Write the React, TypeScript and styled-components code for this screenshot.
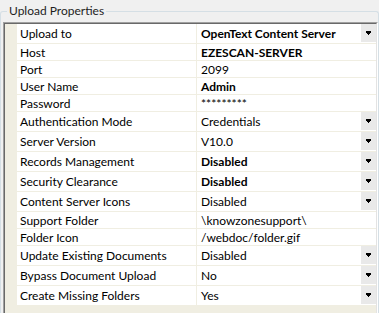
import React from 'react';
import styled, { createGlobalStyle } from 'styled-components';

const colors = {
  window: '#f0f0f0',
  groupLine: '#d5dfe5',
  margin: '#f0eee2',
  cell: '#ffffff',
  text: '#000000',
  button: '#e9e9e9',
  borderDark: '#a0a0a0',
  borderDarker: '#696969',
  borderLight: '#e3e3e3',
};

const GlobalStyle = createGlobalStyle`
  html, body {
    margin: 0;
    padding: 0;
    background: ${colors.window};
    overflow: hidden;
  }
  body {
    font-family: Lato, 'Liberation Sans', sans-serif;
    font-size: 12px;
    color: ${colors.text};
  }
`;

type Prop = {
  label: string;
  value: string;
  bold?: boolean;
  dropdown?: boolean;
};

const props: Prop[] = [
  { label: 'Upload to', value: 'OpenText Content Server', bold: true, dropdown: true },
  { label: 'Host', value: 'EZESCAN-SERVER', bold: true },
  { label: 'Port', value: '2099' },
  { label: 'User Name', value: 'Admin', bold: true },
  { label: 'Password', value: '*********' },
  { label: 'Authentication Mode', value: 'Credentials', dropdown: true },
  { label: 'Server Version', value: 'V10.0', dropdown: true },
  { label: 'Records Management', value: 'Disabled', bold: true, dropdown: true },
  { label: 'Security Clearance', value: 'Disabled', bold: true, dropdown: true },
  { label: 'Content Server Icons', value: 'Disabled', dropdown: true },
  { label: 'Support Folder', value: '\\knowzonesupport\\' },
  { label: 'Folder Icon', value: '/webdoc/folder.gif' },
  { label: 'Update Existing Documents', value: 'Disabled', dropdown: true },
  { label: 'Bypass Document Upload', value: 'No', dropdown: true },
  { label: 'Create Missing Folders', value: 'Yes', dropdown: true },
];

const Group = styled.fieldset`
  margin: 4px 0 0;
  padding: 4px 0 0 2px;
  border: 1px solid ${colors.groupLine};
  border-bottom: none;
  border-radius: 3px 3px 0 0;
  min-width: 0;
`;

const Title = styled.legend`
  margin-left: 4px;
  padding: 0 2px;
  line-height: 14px;
  font-size: 12px;
  color: #1e1e1e;
`;

const Frame = styled.div`
  border: 1px solid;
  border-color: ${colors.borderDark} #ffffff #ffffff ${colors.borderDark};
`;

const Grid = styled.div`
  height: 300px;
  padding-left: 12px;
  background: ${colors.margin};
  border: 1px solid;
  border-color: ${colors.borderDarker} ${colors.borderLight} ${colors.borderLight} ${colors.borderDarker};
  display: flex;
  flex-direction: column;
  gap: 1px;
`;

const Row = styled.div<{ $tall: boolean }>`
  display: grid;
  grid-template-columns: 179px 1fr;
  column-gap: 1px;
  height: ${({ $tall }) => ($tall ? 19 : 16)}px;
`;

const Label = styled.div`
  background: ${colors.cell};
  padding-left: 3px;
  display: flex;
  align-items: center;
  white-space: nowrap;
`;

const ValueCell = styled.div`
  background: ${colors.cell};
  padding-left: 4px;
  display: flex;
  align-items: center;
  justify-content: space-between;
`;

const Value = styled.span<{ $bold: boolean }>`
  font-weight: ${({ $bold }) => ($bold ? 700 : 400)};
  white-space: nowrap;
`;

const DropButton = styled.div`
  align-self: flex-start;
  width: 15px;
  height: 18px;
  background: ${colors.button};
  display: flex;
  align-items: center;
  justify-content: center;
`;

const Arrow = () => (
  <svg width="5" height="4" viewBox="0 0 5 4" shapeRendering="crispEdges">
    <rect x="0" y="0" width="5" height="2" fill="#000" />
    <rect x="1" y="2" width="3" height="1" fill="#000" />
    <rect x="2" y="3" width="1" height="1" fill="#000" />
  </svg>
);

export default function App() {
  return (
    <>
      <GlobalStyle />
      <Group>
        <Title>Upload Properties</Title>
        <Frame>
          <Grid>
            {props.map((p) => (
              <Row key={p.label} $tall={!!p.dropdown}>
                <Label>{p.label}</Label>
                <ValueCell>
                  <Value $bold={!!p.bold}>{p.value}</Value>
                  {p.dropdown && (
                    <DropButton>
                      <Arrow />
                    </DropButton>
                  )}
                </ValueCell>
              </Row>
            ))}
          </Grid>
        </Frame>
      </Group>
    </>
  );
}
